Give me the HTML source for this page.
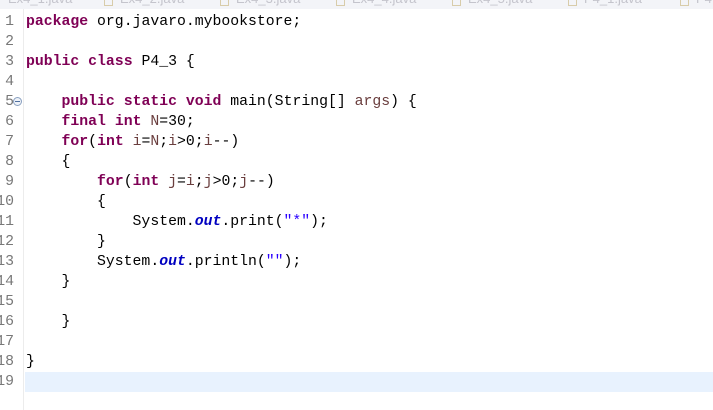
<!DOCTYPE html>
<html><head><meta charset="utf-8"><style>
html,body{margin:0;padding:0;background:#fff;width:713px;height:410px;overflow:hidden;position:relative}
.top{position:absolute;left:0;top:0;width:713px;height:9px;background:#f3f4f8;overflow:hidden}
.top span{position:absolute;top:-9px;font:13px "Liberation Sans",sans-serif;color:#c4c4cc}
.top i{position:absolute;top:0;width:7px;height:5px;border:1px solid #d8ccaa;border-top:none}
.gut{position:absolute;left:23px;top:9px;width:1px;height:401px;background:#ececec}
.hl{position:absolute;left:25px;top:372px;width:688px;height:20px;background:#e8f2fe}
.ln{position:absolute;right:699px;top:12px;text-align:right;font:14.8px "Liberation Mono",monospace;color:#787878;line-height:20px;white-space:pre}
.code{position:absolute;left:26px;top:12px;font:14.8px "Liberation Mono",monospace;line-height:20px;white-space:pre;color:#000}
.k{color:#7f0055;font-weight:bold}.v{color:#6a3e3e}.f{color:#0000c0;font-weight:bold;font-style:italic}.s{color:#2a00ff}
.fold{position:absolute;left:13px;top:97px;width:7px;height:7px;border:1px solid #8aa0c0;border-radius:50%;background:#eef2f8}
.fold:after{content:"";position:absolute;left:1px;top:3px;width:5px;height:1px;background:#5070a0}
</style></head><body>
<div class="top">
<span style="left:8px">Ex4_1.java</span>
<i style="left:104px"></i><span style="left:120px">Ex4_2.java</span>
<i style="left:220px"></i><span style="left:236px">Ex4_3.java</span>
<i style="left:336px"></i><span style="left:352px">Ex4_4.java</span>
<i style="left:452px"></i><span style="left:468px">Ex4_5.java</span>
<i style="left:568px"></i><span style="left:584px">P4_1.java</span>
<i style="left:680px"></i><span style="left:696px">P4</span>
</div>
<div class="gut"></div>
<div class="hl"></div>
<div class="ln">1
2
3
4
5
6
7
8
9
10
11
12
13
14
15
16
17
18
19</div>
<div class="fold"></div>
<div class="code"><span class="k">package</span> org.javaro.mybookstore;

<span class="k">public</span> <span class="k">class</span> P4_3 {

    <span class="k">public</span> <span class="k">static</span> <span class="k">void</span> main(String[] <span class="v">args</span>) {
    <span class="k">final</span> <span class="k">int</span> <span class="v">N</span>=30;
    <span class="k">for</span>(<span class="k">int</span> <span class="v">i</span>=<span class="v">N</span>;<span class="v">i</span>&gt;0;<span class="v">i</span>--)
    {
        <span class="k">for</span>(<span class="k">int</span> <span class="v">j</span>=<span class="v">i</span>;<span class="v">j</span>&gt;0;<span class="v">j</span>--)
        {
            System.<span class="f">out</span>.print(<span class="s">"*"</span>);
        }
        System.<span class="f">out</span>.println(<span class="s">""</span>);
    }

    }

}
</div>
</body></html>
